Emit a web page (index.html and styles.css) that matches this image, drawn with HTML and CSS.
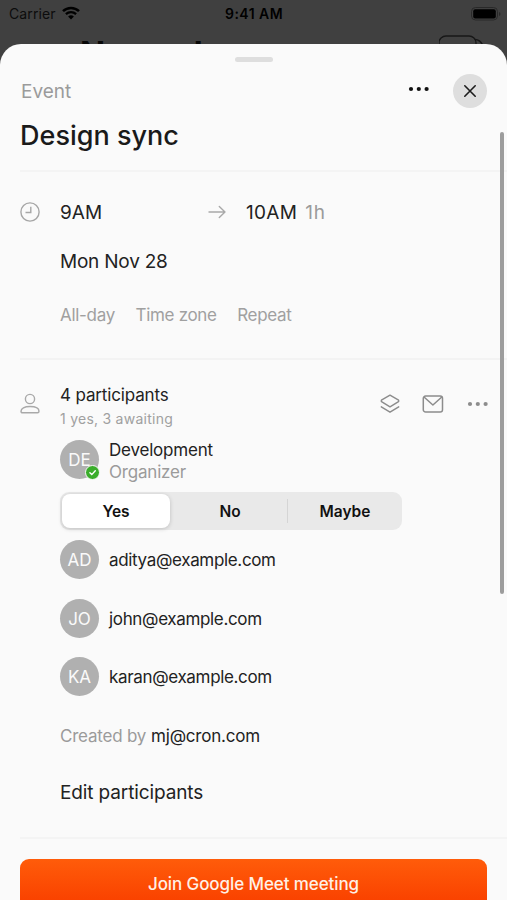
FILE: index.html
```html
<!DOCTYPE html>
<html lang="en">
<head>
<meta charset="utf-8">
<title>Design sync</title>
<link rel="stylesheet" href="styles.css">
</head>
<body>
<div class="phone">
  <header class="status">
    <div class="carrier"><span>Carrier</span>
      <svg width="18" height="14" viewBox="0 0 18 14" fill="none" stroke="#000"><path d="M1 5.1a11.7 11.7 0 0 1 16 0" stroke-width="2.6"/><path d="M3.9 8.2a7.5 7.5 0 0 1 10.2 0" stroke-width="2.3"/><path d="M9 13.6 6.1 10.6a4.2 4.2 0 0 1 5.8 0z" fill="#000" stroke="none"/></svg>
    </div>
    <div class="clock">9:41 AM</div>
    <svg class="battery" width="30" height="14" viewBox="0 0 30 14"><rect x=".5" y=".5" width="26" height="12.5" rx="4" fill="none" stroke="#292929"/><rect x="2.2" y="2.2" width="22.6" height="9.2" rx="2" fill="#000"/><path d="M28 5v4q1.5-.7 1.5-2T28 5" fill="#292929"/></svg>
  </header>
  <div class="behind"><span class="month">November</span>
    <svg width="48" height="24" viewBox="0 0 48 24" fill="none" stroke="#171717" stroke-width="1.3"><rect x="0" y="1" width="37" height="22" rx="7"/><path d="M36 4.500q5 0 8 6"/></svg>
  </div>
  <main class="sheet">
    <div class="handle"></div>
    <div class="top">
      <span class="kind">Event</span>
      <svg class="more" width="22" height="6" viewBox="0 0 22 6" fill="#111"><circle cx="3" cy="3" r="2.1"/><circle cx="10.8" cy="3" r="2.1"/><circle cx="18.6" cy="3" r="2.1"/></svg>
      <button class="close" aria-label="Close"><svg width="14" height="14" viewBox="0 0 14 14" fill="none" stroke="#1c1c1c" stroke-width="1.6" stroke-linecap="round"><path d="m1.8 1.8 10.4 10.4M12.2 1.8 1.8 12.2"/></svg></button>
    </div>
    <h1><span>Design sync</span></h1>
    <section class="when">
      <div class="times">
        <svg class="lead" width="20" height="20" viewBox="0 0 20 20" fill="none" stroke="#a6a6a6" stroke-width="1.4"><circle cx="10" cy="10" r="9.1"/><path d="M10.8 4.7v5.8H5.5"/></svg>
        <span class="start">9AM</span>
        <svg class="arrow" width="18" height="14" viewBox="0 0 18 14" fill="none" stroke="#a9a9a9" stroke-width="1.4" stroke-linecap="round" stroke-linejoin="round"><path d="M1 7h16M11.3 1.5 17 7l-5.7 5.5"/></svg>
        <span class="end">10AM</span><span class="duration">1h</span>
      </div>
      <div class="date"><span>Mon Nov 28</span></div>
      <div class="options"><span>All-day</span><span>Time zone</span><span>Repeat</span></div>
    </section>
    <section class="people">
      <div class="summary">
        <svg class="lead" width="20" height="22" viewBox="0 0 20 22" fill="none" stroke="#a9a9a9" stroke-width="1.4"><circle cx="10" cy="6" r="4.6"/><path d="M1 18.3c0-3 3.4-4.8 9-4.8s9 1.8 9 4.8q0 1.500-1.500 1.500h-15Q1 19.800 1 18.300z"/></svg>
        <div class="counts"><span class="total">4 participants</span><span class="replies">1 yes, 3 awaiting</span></div>
        <div class="tools">
          <svg width="20" height="20" viewBox="0 0 20 20" fill="none" stroke="#8c8c8c" stroke-width="1.4" stroke-linejoin="round" stroke-linecap="round"><path d="M10 1.200 18.600 6.200Q19 7 18.500 7.600L10 12.800 1.500 7.600Q1 7 1.400 6.200z"/><path d="m1.300 12.800 8.700 5.400 8.700-5.400"/></svg>
          <svg width="22" height="18" viewBox="0 0 22 18" fill="none" stroke="#8c8c8c" stroke-width="1.5" stroke-linejoin="round"><rect x="1.300" y="1" width="19.200" height="16" rx="2.300"/><path d="m2 2 8.900 8L19.800 2"/></svg>
          <svg width="22" height="6" viewBox="0 0 22 6" fill="#8c8c8c"><circle cx="3" cy="3" r="2.100"/><circle cx="10.800" cy="3" r="2.100"/><circle cx="18.600" cy="3" r="2.100"/></svg>
        </div>
      </div>
      <div class="organizer">
        <div class="avatar">DE<svg class="badge" width="15" height="15" viewBox="0 0 15 15"><circle cx="7.500" cy="7.500" r="7" fill="#3aad2b" stroke="#fafafa"/><path d="m4.900 7.800 1.900 1.800 3.500-3.800" fill="none" stroke="#fff" stroke-width="1.400" stroke-linecap="round"/></svg></div>
        <div class="who"><span class="name">Development</span><span class="role">Organizer</span></div>
      </div>
      <div class="segments"><span class="seg on">Yes</span><span class="seg">No</span><span class="seg split">Maybe</span></div>
      <div class="guest"><div class="avatar">AD</div><span>aditya@example.com</span></div>
      <div class="guest"><div class="avatar">JO</div><span>john@example.com</span></div>
      <div class="guest"><div class="avatar">KA</div><span>karan@example.com</span></div>
      <div class="created"><span>Created by</span><b>mj@cron.com</b></div>
      <div class="edit"><span>Edit participants</span></div>
    </section>
    <button class="join"><span>Join Google Meet meeting</span></button>
    <div class="scrollbar"></div>
  </main>
</div>
</body>
</html>
```

FILE: styles.css
```css
* { box-sizing: border-box; }
body { margin: 0; background: #404040; font-family: Inter, "Liberation Sans", sans-serif; color: #222; }
svg { display: block; flex: none; }
button { border: 0; padding: 0; font-family: inherit; }
span, b { white-space: nowrap; }
.phone { width: 507px; height: 900px; overflow: hidden; position: relative; }
.status { height: 28px; display: grid; grid-template-columns: 1fr auto 1fr; align-items: center; padding: 0 6px 2px 9px; color: #000; font-size: 14px; }
.carrier { display: flex; align-items: center; gap: 6px; color: #0c0c0c; letter-spacing: .1px; }
.carrier svg { margin-top: -1px; }
.clock { font-weight: 600; font-size: 14px; letter-spacing: .45px; margin-right: 2px; }
.battery { justify-self: end; margin-top: 1px; }
.behind { height: 16px; padding: 7px 20px 0 80px; display: flex; justify-content: space-between; }
.month { font-size: 33px; line-height: 36px; font-weight: 700; color: #080808; }
.sheet { position: relative; height: 856px; background: #fafafa; border-radius: 21px 21px 0 0; padding-top: 13px; }
.handle { width: 38px; height: 5px; border-radius: 3px; background: #dedede; margin: 0 auto; }
.top { height: 58px; display: flex; align-items: center; padding: 0 20px 0 21px; }
.kind { font-size: 19px; color: #9b9b9b; flex: 1; }
.more { margin: -5px 23px 0 0; }
.close { width: 34px; height: 34px; border-radius: 50%; background: #dedede; display: grid; place-items: center; }
h1 { margin: 0 0 0 20px; height: 52px; border-bottom: 2px solid #f4f4f4; font-size: 27px; line-height: 31px; font-weight: 500; color: #1a1a1a; letter-spacing: .02px; }
.when { height: 188px; margin-left: 20px; border-bottom: 2px solid #f3f3f3; font-size: 19px; }
.times { height: 80px; display: flex; align-items: center; }
.lead { margin-right: 20px; }
.start { width: 148px; }
.end { letter-spacing: .3px; }
.arrow { margin-right: 20px; }
.duration { color: #9b9b9b; margin-left: 8px; letter-spacing: .8px; }
.date { height: 20px; line-height: 20px; margin-left: 40px; letter-spacing: -.22px; }
.options { display: flex; gap: 20.500px; margin: 33px 0 0 40px; line-height: 20px; font-size: 17px; letter-spacing: -.3px; color: #a0a0a0; }
.people { height: 479px; margin-left: 20px; border-bottom: 2px solid #f4f4f4; padding-top: 23px; }
.summary { height: 48px; display: flex; padding-right: 18px; }
.summary .lead { margin-top: 10px; }
.counts { display: flex; flex-direction: column; flex: 1; }
.total { font-size: 17px; line-height: 24px; letter-spacing: -.15px; }
.replies { font-size: 14px; line-height: 23px; letter-spacing: .25px; color: #a0a0a0; }
.tools { display: flex; align-items: center; gap: 23px; height: 42px; }
.tools svg:first-child { margin-right: -.500px; }
.organizer { height: 61px; margin-left: 40px; padding-top: 9px; display: flex; gap: 10px; }
.avatar { position: relative; width: 39px; height: 39px; border-radius: 50%; background: #b0b0b0; color: #fafafa; display: grid; place-items: center; font-size: 17px; line-height: 41px; letter-spacing: 0; flex: none; }
.badge { position: absolute; right: -1px; bottom: -1px; }
.who { display: flex; flex-direction: column; font-size: 17px; line-height: 22px; margin-top: -1px; letter-spacing: -.2px; }
.role { color: #9b9b9b; }
.segments { width: 342px; height: 38px; margin: 0 0 10px 40px; padding: 2px; border-radius: 9px; background: #e9e9e9; display: grid; grid-template-columns: 108px 117px 113px; align-items: center; font-size: 15.5px; font-weight: 600; color: #111; }
.seg { text-align: center; line-height: 22px; padding-top: 2px; }
.seg:nth-child(2) { padding-left: 3px; }
.on { background: #fff; border-radius: 8px; line-height: 32px; box-shadow: 0 1px 4px rgba(0,0,0,.18); }
.split { border-left: 1px solid #d5d5d5; padding-left: 2px; }
.guest { height: 58.500px; margin-left: 40px; display: flex; align-items: flex-start; gap: 10px; font-size: 17px; line-height: 41px; letter-spacing: -.34px; }
.created { height: 42px; margin-left: 40px; display: flex; gap: 5px; line-height: 41px; font-size: 17px; letter-spacing: -.22px; color: #9b9b9b; }
.created b { font-weight: 400; color: #222; }
.edit { margin: 16px 0 0 40px; line-height: 38px; font-size: 19px; letter-spacing: -.12px; }
.join { display: block; width: 467px; height: 50px; margin: 20px 0 0 20px; border-radius: 9px; background: linear-gradient(#ff5c0a, #fa4300 80%); color: #fff0e6; font-size: 17px; font-weight: 500; letter-spacing: -.1px; }
.scrollbar { position: absolute; top: 88px; right: 3px; width: 4px; height: 462px; border-radius: 2px; background: #9d9d9d; }
```
